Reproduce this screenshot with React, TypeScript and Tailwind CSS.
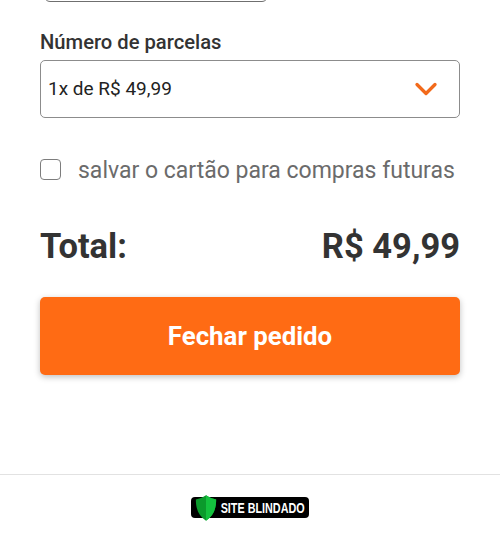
import { ChevronDown } from 'lucide-react';

function SiteBlindado() {
  return (
    <div className="relative flex h-[21px] w-[118px] items-center justify-end rounded-[4px] bg-black pr-[4px]">
      <svg viewBox="0 0 26 30" className="absolute left-[4px] top-[-2px] h-[26px] w-[22px]">
        <path d="M13 0 C17 3 21 4 25 5 C25 16 22 24 13 30 C4 24 1 16 1 5 C5 4 9 3 13 0 Z" fill="#0b9a2c" />
        <path d="M13 0 C17 3 21 4 25 5 C25 16 22 24 13 30 Z" fill="#14c23e" />
      </svg>
      <span className="origin-right scale-x-[0.72] text-[15px] leading-none font-bold whitespace-nowrap text-white [font-family:'Liberation_Sans',sans-serif]">
        SITE BLINDADO
      </span>
    </div>
  );
}

export default function App() {
  return (
    <div className="flex h-[536px] w-[500px] flex-col overflow-hidden bg-white font-['Roboto',sans-serif]">
      {/* campo anterior, cortado pelo topo */}
      <div className="mt-[-38px] ml-[44px] h-[40px] w-[224px] shrink-0 rounded-md border border-[#6f6f6f]" />

      <div className="px-10">
        <label className="mt-[28px] block text-[20.2px] leading-[24px] font-medium text-[#333333]">
          Número de parcelas
        </label>
        <div className="mt-[6px] flex h-[58px] items-center justify-between rounded-[5px] border border-[#8c8c8c] pr-[15px] pl-[7px]">
          <span className="text-[19px] text-[#222222]">1x de R$ 49,99</span>
          <ChevronDown className="h-[36px] w-[36px] text-[#f26a1b]" strokeWidth={2.2} />
        </div>

        <div className="mt-[41px] flex items-start gap-[17px]">
          <div className="h-[21px] w-[21px] rounded-[4px] border-[1.5px] border-[#7d7d7d] bg-white" />
          <span className="mt-[1px] text-[23px] leading-[22px] whitespace-nowrap text-[#6b6b6b]">
            salvar o cartão para compras futuras
          </span>
        </div>

        <div className="mt-[41px] flex items-center justify-between text-[34.5px] leading-[46px] font-bold text-[#333333]">
          <span>Total:</span>
          <span>R$ 49,99</span>
        </div>

        <button className="mt-[28px] flex h-[78px] w-full items-center justify-center rounded-[5px] bg-[#ff6b14] text-[25.8px] font-bold text-white shadow-[0_2px_6px_rgba(0,0,0,0.25)]">
          Fechar pedido
        </button>
      </div>

      <div className="mt-[99px] flex justify-center border-t border-[#e2e2e2] pt-[22px]">
        <SiteBlindado />
      </div>
    </div>
  );
}
